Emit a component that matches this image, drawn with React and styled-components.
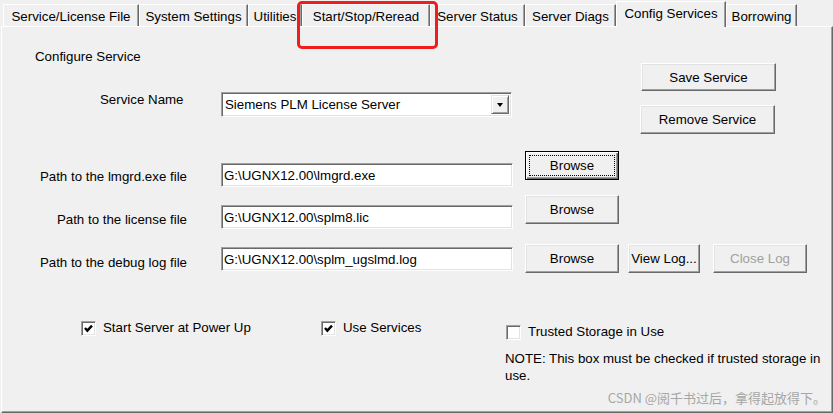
import React from 'react'
import styled, { createGlobalStyle } from 'styled-components'

const GlobalStyle = createGlobalStyle`
  body {
    margin: 0;
    background: #f0f0f0;
    font-family: 'Liberation Sans', Arial, sans-serif;
    font-size: 13.3px;
    color: #000;
  }
`

const tabs = [
  ['Service/License File', 136],
  ['System Settings', 109],
  ['Utilities', 54],
  ['Start/Stop/Reread', 128],
  ['Server Status', 95],
  ['Server Diags', 91],
  ['Config Services', 110, true],
  ['Borrowing', 71],
]

const paths = [
  { label: 'Path to the lmgrd.exe file', value: 'G:\\UGNX12.00\\lmgrd.exe', top: 0, lt: 18, it: 12, focused: true },
  { label: 'Path to the license file', value: 'G:\\UGNX12.00\\splm8.lic', top: 8, lt: 17, it: 10 },
  { label: 'Path to the debug log file', value: 'G:\\UGNX12.00\\splm_ugslmd.log', top: 15, lt: 11, it: 3, log: true },
]

function Check({ checked }) {
  return (
    <Box>
      {checked && (
        <svg width="11" height="11" viewBox="0 0 11 11">
          <polyline points="2,5 4.3,7.6 9,2.6" fill="none" stroke="#000" strokeWidth="2.4" />
        </svg>
      )}
    </Box>
  )
}

export default function App() {
  return (
    <Window>
      <GlobalStyle />
      <TabStrip>
        {tabs.map(([label, w, active]) => (
          <Tab key={label} $w={w} $active={active}>{label}</Tab>
        ))}
      </TabStrip>
      <Annotation />

      <Panel>
        <TopSection>
          <LeftCol>
            <Heading>Configure Service</Heading>
            <ServiceRow>
              <ServiceLabel>Service Name</ServiceLabel>
              <Combo>
                <ComboValue>Siemens PLM License Server</ComboValue>
                <ComboArrow />
              </Combo>
            </ServiceRow>
          </LeftCol>
          <ButtonCol>
            <Button $w={135} $h={28} $ml={1}>Save Service</Button>
            <Button $w={135} $h={29}>Remove Service</Button>
          </ButtonCol>
        </TopSection>

        {paths.map(p => (
          <PathRow key={p.label} $top={p.top}>
            <PathLabel $top={p.lt}>{p.label}</PathLabel>
            <PathInput $top={p.it} readOnly value={p.value} />
            <Button $w={94} $h={29} $ml={12} $focused={p.focused}>Browse</Button>
            {p.log && (
              <>
                <Button $w={72} $h={29} $ml={9}>View Log...</Button>
                <Button $w={94} $h={29} $ml={13} $disabled>Close Log</Button>
              </>
            )}
          </PathRow>
        ))}

        <CheckSection>
          <CheckItem $w={240} $ml={79}>
            <Check checked />
            Start Server at Power Up
          </CheckItem>
          <CheckItem $w={184}>
            <Check checked />
            Use Services
          </CheckItem>
          <TrustBlock>
            <CheckItem $ml={1}>
              <Check />
              Trusted Storage in Use
            </CheckItem>
            <Note>NOTE: This box must be checked if trusted storage in use.</Note>
          </TrustBlock>
        </CheckSection>

        <Watermark>CSDN @阅千书过后，拿得起放得下。</Watermark>
      </Panel>
    </Window>
  )
}

const Window = styled.div`
  position: relative;
  width: 833px;
  height: 413px;
  overflow: hidden;
`

const TabStrip = styled.div`
  display: flex;
  align-items: flex-end;
  height: 26px;
  padding-left: 3px;
  box-sizing: border-box;
`

const Tab = styled.div`
  position: relative;
  z-index: ${p => (p.$active ? 1 : 0)};
  box-sizing: border-box;
  width: ${p => p.$w}px;
  height: ${p => (p.$active ? 26 : 22)}px;
  margin-bottom: ${p => (p.$active ? -1 : 0)}px;
  padding: ${p => (p.$active ? '0 0 2px' : '1px 0 0')};
  display: flex;
  align-items: center;
  justify-content: center;
  white-space: nowrap;
  background: #f0f0f0;
  border-top: 1px solid #fff;
  border-left: 1px solid #fff;
  border-right: 1px solid #696969;
  box-shadow: inset -1px 0 #a0a0a0;
`

const Annotation = styled.div`
  position: absolute;
  left: 297px;
  top: 1px;
  width: 141px;
  height: 48px;
  box-sizing: border-box;
  border: 3px solid #f01d1d;
  border-radius: 5px;
  pointer-events: none;
  z-index: 2;
`

const Panel = styled.div`
  position: relative;
  box-sizing: border-box;
  margin-left: 1px;
  width: 832px;
  height: 387px;
  background: #f0f0f0;
  border-top: 1px solid #fff;
  border-left: 1px solid #fff;
  border-right: 1px solid #696969;
  border-bottom: 1px solid #696969;
  box-shadow: inset -1px -1px #a0a0a0;
`

const TopSection = styled.div`
  display: flex;
  height: 124px;
`

const LeftCol = styled.div`
  width: 638px;
`

const Heading = styled.div`
  margin: 22px 0 0 33px;
  line-height: 16px;
`

const ServiceRow = styled.div`
  display: flex;
  margin-top: 27px;
  padding-left: 98px;
`

const ServiceLabel = styled.div`
  width: 121px;
  line-height: 16px;
`

const Combo = styled.div`
  box-sizing: border-box;
  width: 291px;
  height: 25px;
  display: flex;
  align-items: center;
  background: #fff;
  border-top: 1px solid #a0a0a0;
  border-left: 1px solid #a0a0a0;
  border-right: 1px solid #fff;
  border-bottom: 1px solid #fff;
  box-shadow: inset 1px 1px #696969, inset -1px -1px #e3e3e3;
`

const ComboValue = styled.div`
  flex: 1;
  padding-left: 3px;
  white-space: nowrap;
`

const ComboArrow = styled.div`
  box-sizing: border-box;
  width: 18px;
  height: 19px;
  margin-right: 2px;
  display: flex;
  align-items: center;
  justify-content: center;
  background: #f0f0f0;
  border: 1px solid;
  border-color: #e3e3e3 #696969 #696969 #e3e3e3;
  box-shadow: inset 1px 1px #fff, inset -1px -1px #a0a0a0;

  &::before {
    content: '';
    border-left: 3.5px solid transparent;
    border-right: 3.5px solid transparent;
    border-top: 4px solid #000;
    margin-top: 1px;
  }
`

const ButtonCol = styled.div`
  display: flex;
  flex-direction: column;
  align-items: flex-start;
  gap: 14px;
  padding-top: 36px;
`

const Button = styled.button`
  position: relative;
  box-sizing: border-box;
  width: ${p => p.$w}px;
  height: ${p => p.$h}px;
  margin: 0 0 0 ${p => p.$ml || 0}px;
  padding: 0;
  font: inherit;
  color: ${p => (p.$disabled ? '#a0a0a0' : '#000')};
  background: #f0f0f0;
  border: 1px solid;
  border-color: ${p => (p.$focused ? '#000' : '#fff #696969 #696969 #fff')};
  box-shadow: ${p =>
    p.$focused
      ? 'inset 1px 1px #fff, inset -1px -1px #696969, inset -2px -2px #a0a0a0'
      : 'inset -1px -1px #a0a0a0, inset 1px 1px #e3e3e3'};

  ${p =>
    p.$focused &&
    `&::after {
      content: '';
      position: absolute;
      inset: 3px;
      border: 1px dotted #000;
    }`}
`

const PathRow = styled.div`
  display: flex;
  align-items: flex-start;
  margin-top: ${p => p.$top}px;
`

const PathLabel = styled.div`
  width: 185px;
  margin-top: ${p => p.$top}px;
  text-align: right;
  line-height: 16px;
  white-space: nowrap;
`

const PathInput = styled.input`
  box-sizing: border-box;
  width: 292px;
  height: 24px;
  margin: ${p => p.$top}px 0 0 34px;
  padding: 0 2px;
  font: inherit;
  color: #000;
  background: #fff;
  outline: none;
  border-top: 1px solid #a0a0a0;
  border-left: 1px solid #a0a0a0;
  border-right: 1px solid #fff;
  border-bottom: 1px solid #fff;
  box-shadow: inset 1px 1px #696969, inset -1px -1px #e3e3e3;
`

const CheckSection = styled.div`
  display: flex;
  align-items: flex-start;
  margin-top: 47px;
`

const CheckItem = styled.label`
  display: flex;
  align-items: center;
  gap: 7px;
  width: ${p => (p.$w ? `${p.$w}px` : 'auto')};
  margin-left: ${p => p.$ml || 0}px;
  line-height: 16px;
  white-space: nowrap;
`

const Box = styled.span`
  box-sizing: border-box;
  width: 15px;
  height: 15px;
  display: flex;
  align-items: center;
  justify-content: center;
  background: #fff;
  border-top: 1px solid #a0a0a0;
  border-left: 1px solid #a0a0a0;
  border-right: 1px solid #fff;
  border-bottom: 1px solid #fff;
  box-shadow: inset 1px 1px #696969, inset -1px -1px #e3e3e3;
`

const TrustBlock = styled.div`
  margin-top: 4px;
  width: 322px;
`

const Note = styled.div`
  margin-top: 10px;
  line-height: 17px;
`

const Watermark = styled.div`
  position: absolute;
  right: 6px;
  bottom: 6px;
  font-family: 'Noto Sans CJK SC', 'Liberation Sans', sans-serif;
  font-size: 13px;
  line-height: 16px;
  color: #a6a6a6;
  white-space: nowrap;
`
